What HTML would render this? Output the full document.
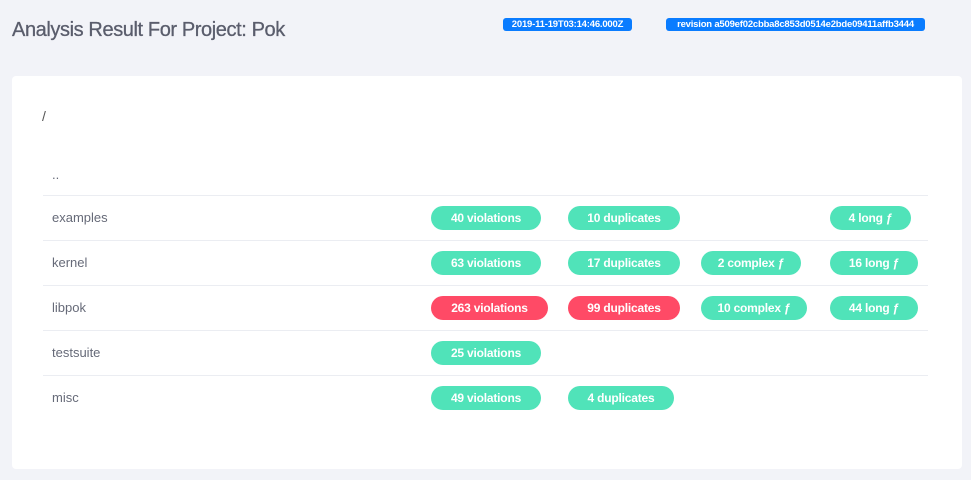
<!DOCTYPE html>
<html><head><style>
body{margin:0;width:971px;height:480px;background:#f2f3f8;font-family:"Liberation Sans",sans-serif;position:relative;overflow:hidden}
.t{position:absolute;left:12px;top:19px;font-size:20px;color:#5a5d6c;letter-spacing:-0.4px;-webkit-text-stroke:0.3px #5a5d6c}
.b{position:absolute;top:18px;height:13px;line-height:13px;background:#0a7cff;color:#fff;font-size:9.5px;font-weight:bold;border-radius:3px;text-align:center;letter-spacing:-0.2px}
.card{position:absolute;left:12px;top:76px;width:950px;height:393px;background:#fff;border-radius:4px}
.slash{position:absolute;left:42px;top:108px;font-size:14px;color:#555}
.row{position:absolute;left:43px;width:885px;height:45px;border-top:1px solid #ebedf2}
.n{position:absolute;left:9px;top:1px;line-height:42px;font-size:13px;color:#666a78}
.p{position:absolute;top:10px;height:24px;line-height:24px;border-radius:12px;background:#50e3b9;color:#fff;font-size:12px;font-weight:bold;text-align:center;letter-spacing:-0.2px}
.r{background:#ff4a66}
</style></head><body>
<div class="t">Analysis Result For Project: Pok</div>
<div class="b" style="left:503px;width:129px">2019-11-19T03:14:46.000Z</div>
<div class="b" style="left:666px;width:259px">revision a509ef02cbba8c853d0514e2bde09411affb3444</div>
<div class="card"></div>
<div class="slash">/</div>
<div class="row" style="top:152px;border-top:none"><div class="n" style="top:2px">..</div></div>
<div class="row" style="top:195px"><div class="n">examples</div>
<div class="p" style="left:388px;width:110px">40 violations</div>
<div class="p" style="left:525px;width:112px">10 duplicates</div>
<div class="p" style="left:787px;width:81px">4 long ƒ</div></div>
<div class="row" style="top:240px"><div class="n">kernel</div>
<div class="p" style="left:388px;width:110px">63 violations</div>
<div class="p" style="left:525px;width:112px">17 duplicates</div>
<div class="p" style="left:658px;width:100px">2 complex ƒ</div>
<div class="p" style="left:787px;width:88px">16 long ƒ</div></div>
<div class="row" style="top:285px"><div class="n">libpok</div>
<div class="p r" style="left:388px;width:117px">263 violations</div>
<div class="p r" style="left:525px;width:112px">99 duplicates</div>
<div class="p" style="left:658px;width:106px">10 complex ƒ</div>
<div class="p" style="left:787px;width:88px">44 long ƒ</div></div>
<div class="row" style="top:330px"><div class="n">testsuite</div>
<div class="p" style="left:388px;width:110px">25 violations</div></div>
<div class="row" style="top:375px"><div class="n">misc</div>
<div class="p" style="left:388px;width:110px">49 violations</div>
<div class="p" style="left:525px;width:106px">4 duplicates</div></div>
</body></html>
